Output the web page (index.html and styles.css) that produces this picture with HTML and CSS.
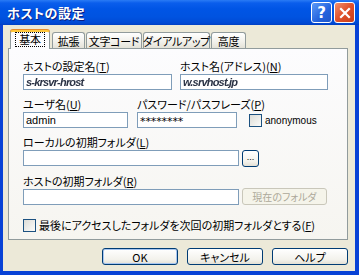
FILE: index.html
```html
<!DOCTYPE html>
<html lang="ja">
<head>
  <meta charset="UTF-8" />
  <title>ホストの設定</title>
  <link rel="stylesheet" href="styles.css">
</head>
<body>

  <div class="window">
    <div class="titlebar">
      <span class="title">ホストの設定</span>
      <div class="cap help">?</div>
      <div class="cap close">
        <svg width="12" height="12" viewBox="0 0 12 12"><path d="M2 2 L10 10 M10 2 L2 10" stroke="#fff" stroke-width="2.2" stroke-linecap="square"/></svg>
      </div>
    </div>

    <div class="frame">
      <div class="tabs">
        <div class="tab active w40"><span class="focus">基本</span></div>
        <div class="tab w33">拡張</div>
        <div class="tab w56">文字コード</div>
        <div class="tab w67">ダイアルアップ</div>
        <div class="tab w35">高度</div>
      </div>

      <div class="panel">
        <div class="row">
          <div class="field w149">
            <label>ホストの設定名(<u>T</u>)</label>
            <div class="edit"><span class="blur">s-krsvr-hrost</span></div>
          </div>
          <div class="field w148 gap8">
            <label>ホスト名(アドレス)(<u>N</u>)</label>
            <div class="edit"><span class="blur">w.srvhost.jp</span></div>
          </div>
        </div>

        <div class="row">
          <div class="field w105">
            <label>ユーザ名(<u>U</u>)</label>
            <div class="edit">admin</div>
          </div>
          <div class="field w100 gap9">
            <label>パスワード/パスフレーズ(<u>P</u>)</label>
            <div class="edit pass">********</div>
          </div>
          <div class="check anon">
            <span class="box"></span>
            <span class="latin">anonymous</span>
          </div>
        </div>

        <div class="row">
          <div class="field">
            <label>ローカルの初期フォルダ(<u>L</u>)</label>
            <div class="line">
              <div class="edit w216"></div>
              <div class="btn small">...</div>
            </div>
          </div>
        </div>

        <div class="row">
          <div class="field">
            <label>ホストの初期フォルダ(<u>R</u>)</label>
            <div class="line">
              <div class="edit w216"></div>
              <div class="btn disabled">現在のフォルダ</div>
            </div>
          </div>
        </div>

        <div class="check last">
          <span class="box"></span>
          <span>最後にアクセスしたフォルダを次回の初期フォルダとする(<u>F</u>)</span>
        </div>
      </div>

      <div class="buttons">
        <div class="btn push default">OK</div>
        <div class="btn push">キャンセル</div>
        <div class="btn push">ヘルプ</div>
      </div>
    </div>
  </div>

</body>
</html>
```

FILE: styles.css
```css
body {
  margin: 0;
  font-family: "Noto Sans CJK JP", sans-serif;
  font-size: 11px;
  font-feature-settings: "palt";
  color: #000;
}
.window {
  width: 359px;
  height: 275px;
  display: flex;
  flex-direction: column;
  background: #0842d6;
}
.titlebar {
  height: 25px;
  flex: none;
  display: flex;
  align-items: center;
  padding: 0 4px 0 7px;
  background: linear-gradient(#2a7bf5 0, #0a5eec 3px, #0055e5 9px, #0053e0 17px, #0049d4 23px, #003fc2 25px);
}
.title {
  flex: 1;
  color: white;
  font-weight: bold;
  font-size: 13px;
  letter-spacing: 0.5px;
  text-shadow: 1px 1px #0a1d80;
}
.cap {
  width: 19px;
  height: 19px;
  border: 1px solid white;
  border-radius: 3px;
  margin-left: 2px;
  display: flex;
  align-items: center;
  justify-content: center;
  color: white;
}
.help {
  background: linear-gradient(135deg, #5b9af8, #2463dd 60%, #1f56c9);
  font-family: "DejaVu Sans", sans-serif;
  font-weight: bold;
  font-size: 15px;
}
.close {
  background: linear-gradient(135deg, #f09070, #e0502a 50%, #c9401c);
}
.frame {
  flex: 1;
  background: #ece9d8;
  border: solid #0842d6;
  border-width: 0 4px 4px 3px;
  padding: 5px 7px 0 5px;
  display: flex;
  flex-direction: column;
}
.tabs {
  display: flex;
  align-items: flex-end;
  height: 18px;
  padding-left: 2px;
  position: relative;
  z-index: 1;
}
.tab {
  height: 16px;
  margin-left: 1px;
  box-sizing: border-box;
  border: 1px solid #919b9c;
  border-bottom: none;
  border-radius: 3px 3px 0 0;
  background: linear-gradient(#fff, #f1f0ea 60%, #e4e2d8);
  display: flex;
  align-items: center;
  justify-content: center;
  line-height: 14px;
  white-space: nowrap;
  letter-spacing: -0.3px;
}
.tab.active {
  height: 19px;
  margin-left: 0;
  margin-bottom: -1px;
  margin-right: 1px;
  border-top: 2px solid #ffc73c;
  box-shadow: 0 -1px 0 #e68b2c;
  background: #fcfcfe;
  padding-bottom: 2px;
}
.focus {
  outline: 1px dotted #000;
  padding: 0 3px;
  line-height: 13px;
}
.w33 { width: 33px; }
.w35 { width: 35px; }
.w40 { width: 40px; }
.w56 { width: 56px; }
.w67 { width: 67px; }
.panel {
  height: 192px;
  box-sizing: border-box;
  border: 1px solid #919b9c;
  background: linear-gradient(#fcfcfe, #f6f5f0);
  padding: 10px 0 0 14px;
  display: flex;
  flex-direction: column;
  gap: 7px;
}
.row {
  display: flex;
  align-items: flex-start;
}
.field {
  display: flex;
  flex-direction: column;
  flex: none;
}
.field label {
  line-height: 14px;
  height: 14px;
  margin-bottom: 1px;
  white-space: nowrap;
}
.gap8 { margin-left: 8px; }
.gap9 { margin-left: 9px; }
.line {
  display: flex;
  align-items: flex-start;
}
.edit {
  height: 16px;
  box-sizing: border-box;
  border: 1px solid #7f9db9;
  background: white;
  padding-left: 2px;
  font-family: "Liberation Sans", sans-serif;
  font-size: 11px;
  line-height: 14px;
  overflow: hidden;
  white-space: nowrap;
}
.w100 { width: 100px; }
.w105 { width: 105px; }
.w148 { width: 148px; }
.w149 { width: 149px; }
.w216 { width: 216px; }
.pass {
  font-family: "DejaVu Sans", sans-serif;
  font-size: 11px;
  line-height: 18px;
  letter-spacing: -0.1px;
}
.blur {
  color: #2a3244;
  filter: blur(0.45px);
  display: inline-block;
  font-style: italic;
  font-weight: bold;
  letter-spacing: -0.8px;
}
.check {
  display: flex;
  align-items: center;
  gap: 3px;
  white-space: nowrap;
}
.box {
  width: 13px;
  height: 13px;
  box-sizing: border-box;
  border: 1px solid #1c5180;
  background: linear-gradient(135deg, #dcdcd7, #fbfbf9);
}
.anon {
  margin: 17px 0 0 12px;
}
.latin {
  font-family: "Liberation Sans", sans-serif;
  font-size: 10px;
}
.last {
  margin-top: 5px;
}
.btn {
  box-sizing: border-box;
  border: 1px solid #003c74;
  border-radius: 3px;
  background: linear-gradient(#fff, #f3f2ec 70%, #e3e0d5);
  display: flex;
  align-items: center;
  justify-content: center;
  white-space: nowrap;
}
.small {
  width: 17px;
  height: 17px;
  margin-left: 3px;
  font-family: "Liberation Sans", sans-serif;
  font-size: 9px;
  line-height: 8px;
  padding-bottom: 3px;
}
.disabled {
  width: 85px;
  height: 17px;
  margin: -1px 0 0 3px;
  border-color: #c9c7ba;
  background: #f5f4ea;
  color: #aca899;
  font-size: 10px;
}
.buttons {
  display: flex;
  justify-content: flex-end;
  gap: 9px;
  margin-top: 8px;
}
.push {
  width: 76px;
  height: 17px;
  line-height: 14px;
}
.default {
  box-shadow: inset 0 0 0 1px #a8c6f0;
}
```
